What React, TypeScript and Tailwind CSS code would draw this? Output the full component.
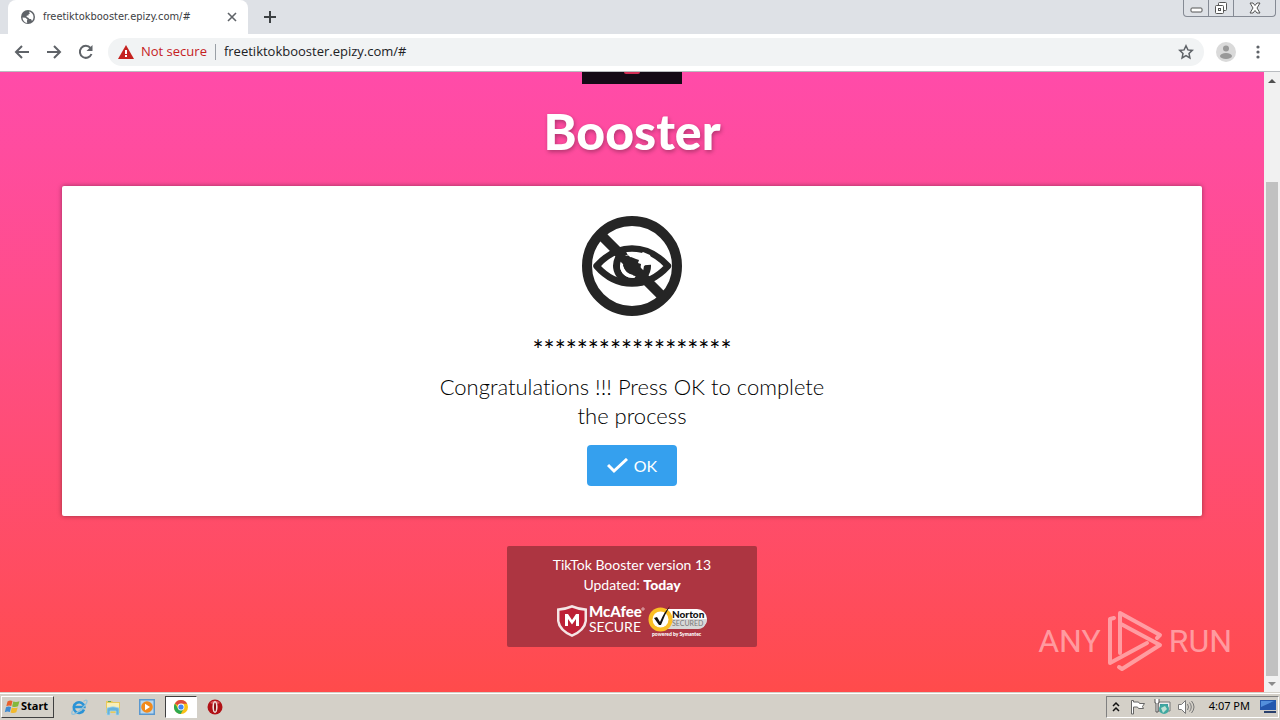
import { useState } from "react";

const QUICK_LAUNCH = [
  { label: "Internet Explorer", icon: <ExplorerIcon />, active: false },
  { label: "Windows Explorer", icon: <FolderIcon />, active: false },
  { label: "Media Player", icon: <MediaIcon />, active: false },
  { label: "Google Chrome", icon: <ChromeIcon />, active: true },
  { label: "Opera", icon: <OperaIcon />, active: false },
];

function GlobeIcon() {
  return (
    <svg width="16" height="16" viewBox="0 0 16 16">
      <circle cx="8" cy="8" r="7" fill="#5f6368" />
      <path d="M2.500 8.500l3 .3 2 1.700-.6 1.300.3 2.300C4.600 13.700 2.500 11.400 2.500 8.500z" fill="#fff" />
      <path d="M9 2.600c2.600.5 4.500 2.700 4.500 5.400 0 1.500-.6 2.900-1.500 3.900l-1-1.900H9.500L8 8.500 6.500 8l.3-1.500H8.500V5.300l1.300-.6z" fill="#fff" />
    </svg>
  );
}

function ExplorerIcon() {
  return (
    <svg width="18" height="18" viewBox="0 0 18 18" fill="none">
      <path d="M14 11.500A5.300 5.300 0 1 1 14.300 9H5" stroke="#2b93d6" strokeWidth="2.600" />
      <path d="M13.500 3.500C15.500 1.700 17 1.700 17 3.300c0 3-9 12-13.500 13-2 .3-2.300-1.500-.8-4" stroke="#8fc2dc" strokeWidth="1.300" />
    </svg>
  );
}

function FolderIcon() {
  return (
    <svg width="18" height="18" viewBox="0 0 18 18">
      <path d="M2 3h6l1 1h7v11H2z" fill="#e9c95b" />
      <path d="M3 5h12v5H3z" fill="#f8efb8" />
      <path d="M4 3h3v1H4z" fill="#5aa75a" />
      <path d="M3 10q6-2.500 12 0v7h-3v-4H6v4H3z" fill="#65b3dc" stroke="#a9d9f0" strokeWidth=".7" />
    </svg>
  );
}

function MediaIcon() {
  return (
    <svg width="18" height="18" viewBox="0 0 18 18">
      <path d="M1 1h16v16H1z" fill="#5a98cf" />
      <path d="M2.500 2.500h13v13h-13z" fill="#b9d7ee" />
      <circle cx="9" cy="9" r="5.800" fill="#f28a1c" />
      <path d="M7 5.700l5 3.300-5 3.300z" fill="#fff" />
    </svg>
  );
}

function ChromeIcon() {
  return (
    <svg width="16" height="16" viewBox="0 0 16 16">
      <circle cx="8" cy="8" r="7" fill="#fbc116" />
      <path d="M8 8L1.900 4.500A7 7 0 0 1 14.100 4.700H8z" fill="#dd4b3e" />
      <path d="M1.900 4.500A7 7 0 0 0 7.700 15L10.700 9.700 8 8 5 9.500z" fill="#2da94f" />
      <circle cx="8" cy="8" r="3.400" fill="#fff" />
      <circle cx="8" cy="8" r="2.600" fill="#4285f4" />
    </svg>
  );
}

function OperaIcon() {
  return (
    <svg width="16" height="16" viewBox="0 0 16 16">
      <circle cx="8" cy="8" r="7.500" fill="#b11116" />
      <path d="M3 4a6.500 6.500 0 0 1 10 0L8 6z" fill="#d9565a" />
      <ellipse cx="8" cy="8" rx="2.600" ry="6" fill="#f1e2de" />
      <ellipse cx="8" cy="8" rx="1" ry="4.500" fill="#8a0c10" />
    </svg>
  );
}

function StartFlag() {
  return (
    <svg width="17" height="16" viewBox="0 0 17 16">
      <path d="M3.500 2.500Q6 .8 8.500 2L7.300 7Q5 5.900 2.300 7.200z" fill="#e8602c" />
      <path d="M9.300 2.500Q12 3.600 15.500 2.200L14 7.300Q11 8.600 8.100 7.400z" fill="#84b83c" />
      <path d="M2 8.200Q4.800 6.900 7.100 8.100L5.900 13Q3.400 11.900.8 13.200z" fill="#3e8bd2" />
      <path d="M7.800 8.500Q10.700 9.700 13.700 8.400L12.300 13.300Q9.500 14.700 6.600 13.400z" fill="#f2b92d" />
    </svg>
  );
}

function HiddenEye() {
  return (
    <svg width="100" height="100" viewBox="0 0 100 100" fill="none" stroke="#252525">
      <circle cx="50" cy="50" r="45" strokeWidth="10" />
      <path d="M14.500 50C25 38 37 32.500 50 32.500S75 38 86 50C75 62 63 67.500 50 67.500S25 62 14.500 50z" strokeWidth="6.500" strokeLinejoin="round" />
      <path d="M44 35.500A15.500 15.500 0 1 0 65.500 49" strokeWidth="7" />
      <path d="M17 17L83 83" strokeWidth="10" />
      <path d="M42 44l7-3 5 2 3 1-1 3 3 1-1 8-6 4-8-3-3-7z" fill="#252525" stroke="none" />
      <path d="M43 40Q50 35 57 39l4-3 7 3 3 10-5-2-4 3v-4l-5-1 1-3Q50 38 43 40z" fill="#fff" stroke="none" />
      <path d="M38 50Q39 62 53 62l-2-3Q43 57 41 50z" fill="#fff" stroke="none" />
    </svg>
  );
}

function McAfeeBadge() {
  return (
    <svg width="90" height="34" viewBox="0 0 90 34" role="img" aria-label="McAfee Secure">
      <path d="M1 4.500Q9 4 16 1Q23 4 31 4.500V17Q30 27 16 33Q2 27 1 17z" fill="#f4e5e5" />
      <path d="M3.500 6.700Q10 6.200 16 3.700Q22 6.200 28.500 6.700V17Q27 25.500 16 30.300Q5 25.500 3.500 17z" fill="#bd2036" />
      <path d="M9 22V10h3l4 6 4-6h3v12h-3v-7l-4 5.500L12 15v7z" fill="#fff" />
      <g fill="#fff" fontFamily="Lato, sans-serif">
        <text x="33" y="13" fontSize="15" fontWeight="900">McAfee</text>
        <text x="33" y="28" fontSize="14">SECURE</text>
      </g>
      <circle cx="87" cy="5" r="1.200" stroke="#fff" strokeWidth=".6" fill="none" />
    </svg>
  );
}

function NortonBadge() {
  return (
    <svg width="60" height="34" viewBox="0 0 60 34" role="img" aria-label="Norton Secured">
      <rect x="3" y="5" width="56" height="20" rx="10" fill="#fff" />
      <path d="M22 15h37q-1 10-10 10H20z" fill="#d8d8d8" />
      <circle cx="12.500" cy="15.500" r="12" fill="#fbbf25" />
      <circle cx="12.500" cy="15.500" r="8" fill="#fff" />
      <path d="M6 14l3-1 3 5Q16 8 22 2Q17 10 13 21h-2z" fill="#111" />
      <g fontFamily="Lato, sans-serif">
        <text x="24" y="14" fontSize="10" fontWeight="900" fill="#111">Norton</text>
        <text x="24" y="22" fontSize="7" fill="#777">SECURED</text>
        <text x="4" y="32" fontSize="5" fontWeight="900" fill="#fff">powered by Symantec</text>
      </g>
    </svg>
  );
}

function WindowControls() {
  return (
    <div className="mr-1 flex h-[17px] rounded-b border border-t-0 border-[#858a94]">
      <button aria-label="Minimize" className="flex w-[25px] items-center justify-center border-r border-[#858a94]">
        <svg width="13" height="13" viewBox="0 0 13 13"><rect x="1" y="6" width="11" height="4" rx="1" fill="#fff" stroke="#555" /></svg>
      </button>
      <button aria-label="Restore" className="flex w-[25px] items-center justify-center border-r border-[#858a94]">
        <svg width="14" height="14" viewBox="0 0 14 14" fill="#fff" stroke="#555">
          <rect x="4.500" y="1.500" width="8" height="8" rx="1" />
          <rect x="1.500" y="4.500" width="8" height="8" rx="1" />
          <rect x="4.500" y="7.500" width="2" height="2" />
        </svg>
      </button>
      <button aria-label="Close window" className="flex w-[41px] items-center justify-center">
        <svg width="12" height="12" viewBox="0 0 12 12" fill="#fff" stroke="#555"><path d="M1 1h3l2 2.500L8 1h3L8 6l3 5H8L6 8.500 4 11H1l3-5z" /></svg>
      </button>
    </div>
  );
}

function TabStrip() {
  return (
    <div className="flex h-[34px] items-start justify-between bg-[#dee1e6]">
      <div className="flex h-full items-center pl-2">
        <div className="flex h-full w-60 items-center rounded-t-lg bg-white pl-3 pr-2">
          <GlobeIcon />
          <span className="ml-[7px] flex-1 font-['DejaVu_Sans_Condensed','DejaVu_Sans',sans-serif] text-[11px] text-[#3c4043]">
            freetiktokbooster.epizy.com/#
          </span>
          <button aria-label="Close tab" className="flex size-4 items-center justify-center">
            <svg width="10" height="10" viewBox="0 0 10 10" stroke="#5f6368" strokeWidth="1.600"><path d="M1 1l8 8M9 1L1 9" /></svg>
          </button>
        </div>
        <button aria-label="New tab" className="ml-4">
          <svg width="12" height="12" viewBox="0 0 12 12" stroke="#3c4043" strokeWidth="2"><path d="M6 0v12M0 6h12" /></svg>
        </button>
      </div>
      <WindowControls />
    </div>
  );
}

function Toolbar() {
  const [url, setUrl] = useState("freetiktokbooster.epizy.com/#");

  return (
    <div className="flex h-[38px] items-center border-b border-[#b9bcc0] bg-white px-3.5 pb-0.5">
      <div className="flex gap-4 text-[#5f6368]">
        <button aria-label="Back">
          <svg width="16" height="16" viewBox="0 0 16 16" fill="none" stroke="currentColor" strokeWidth="2"><path d="M15 8H2M8 2L2 8l6 6" /></svg>
        </button>
        <button aria-label="Forward">
          <svg width="16" height="16" viewBox="0 0 16 16" fill="none" stroke="currentColor" strokeWidth="2"><path d="M1 8h13M8 2l6 6-6 6" /></svg>
        </button>
        <button aria-label="Reload">
          <svg width="16" height="16" viewBox="0 0 16 16" fill="none" stroke="currentColor" strokeWidth="2">
            <path d="M13.500 10A6 6 0 1 1 12.500 4" />
            <path d="M14.500 1v6h-6z" fill="currentColor" stroke="none" />
          </svg>
        </button>
      </div>
      <div className="ml-3.5 flex h-7 flex-1 items-center rounded-full bg-[#f1f3f4] px-2.5 font-['Open_Sans',sans-serif] text-[13px]">
        <svg width="16" height="14" viewBox="0 0 16 14">
          <path d="M8 0l8 14H0z" fill="#c5221f" />
          <path d="M7 5h2v4H7zM7 10h2v2H7z" fill="#fff" />
        </svg>
        <span className="ml-[7px] text-[#c5221f]">Not secure</span>
        <span className="ml-2 h-4 w-px bg-[#9aa0a6]" />
        <input
          aria-label="Address"
          value={url}
          onChange={(e) => setUrl(e.target.value)}
          className="ml-2 min-w-0 flex-1 bg-transparent text-[#202124] outline-none"
        />
        <button aria-label="Bookmark this page">
          <svg width="16" height="16" viewBox="0 0 16 16" fill="none" stroke="#5f6368" strokeWidth="1.500">
            <path d="M8 1.800l1.900 4.100 4.400.5-3.300 3 .9 4.500L8 11.600l-3.900 2.300.9-4.500-3.300-3 4.400-.5z" />
          </svg>
        </button>
      </div>
      <button aria-label="Profile" className="ml-3">
        <svg width="20" height="20" viewBox="0 0 20 20">
          <circle cx="10" cy="10" r="10" fill="#dadada" />
          <circle cx="10" cy="6.500" r="3" fill="#999" />
          <ellipse cx="10" cy="14" rx="6" ry="3" fill="#999" />
        </svg>
      </button>
      <button aria-label="Menu" className="ml-3.5">
        <svg width="16" height="16" viewBox="0 0 16 16" fill="#5f6368">
          <circle cx="8" cy="3" r="1.600" />
          <circle cx="8" cy="8" r="1.600" />
          <circle cx="8" cy="13" r="1.600" />
        </svg>
      </button>
    </div>
  );
}

function Watermark() {
  return (
    <div className="absolute right-8 bottom-5 flex items-center gap-1.5 font-[Roboto,sans-serif] text-[32px] leading-none text-white/45">
      <span>ANY</span>
      <svg width="56" height="62" viewBox="0 0 56 62" fill="none" stroke="currentColor" strokeWidth="4" strokeLinejoin="round" strokeLinecap="round">
        <path d="M13 43V3L53 25L50 28M14 14L53 35L15 59L12 57" />
        <path d="M7 8L3 9V53L40 33" />
      </svg>
      <span>RUN</span>
    </div>
  );
}

function BoosterPage() {
  return (
    <main className="relative flex-1 overflow-hidden bg-linear-to-b from-[#ff4ba9] to-[#ff4b4b] px-8 font-[Lato,sans-serif] [font-variant-ligatures:none]">
      <div className="mx-auto flex h-3 w-[100px] justify-center overflow-hidden bg-[#140a16]">
        <div className="h-0.5 w-4 rounded-b-full bg-[#d32d56]" />
      </div>
      <h1 className="mt-[22px] text-center text-[50px] leading-[50px] font-black text-white [text-shadow:1px_2px_4px_rgba(0,0,0,0.3)]">
        Booster
      </h1>
      <section className="mx-auto mt-[30px] flex max-w-[1140px] flex-col items-center rounded-xs bg-white py-[30px] text-black shadow-[0_0_5px_rgba(0,0,0,0.4)]">
        <HiddenEye />
        <p className="mt-5 text-[26px] leading-[29px]">******************</p>
        <p className="mt-[7px] max-w-[400px] text-center text-[22px] leading-[29px] font-light">
          Congratulations !!! Press OK to complete the process
        </p>
        <button className="mt-[15px] flex h-[41px] w-[90px] items-center justify-center gap-1.5 rounded bg-[#35a0ee] text-[16px] text-white">
          <svg width="21" height="16" viewBox="0 0 21 16" fill="none" stroke="currentColor" strokeWidth="3"><path d="M1 7l6 6L20 1" /></svg>
          OK
        </button>
      </section>
      <footer className="mx-auto mt-[30px] flex h-[101px] w-[250px] flex-col items-center rounded-xs bg-[#ad3541] pt-[9px] text-center text-[14px] leading-5 text-white">
        <p>TikTok Booster version 13</p>
        <p>Updated: <strong className="font-black">Today</strong></p>
        <div className="mt-[9px] flex gap-0.5">
          <McAfeeBadge />
          <NortonBadge />
        </div>
      </footer>
      <Watermark />
    </main>
  );
}

function Scrollbar() {
  return (
    <div className="flex w-4 flex-col items-center bg-[#f1f1f1]">
      <svg width="16" height="17" viewBox="0 0 16 17" fill="#505050"><path d="M4 11l4-4 4 4z" /></svg>
      <div className="h-[93px]" />
      <div className="w-3 flex-1 bg-[#c1c1c1]" />
      <svg width="16" height="16" viewBox="0 0 16 16" fill="#8b8b8b"><path d="M4 6l4 4 4-4z" /></svg>
    </div>
  );
}

function Taskbar() {
  return (
    <div className="flex h-7 items-center justify-between border-t border-[#d4d0c8] bg-[#d4d0c8] px-px text-[11px] text-black shadow-[inset_0_1px_0_#fff]">
      <div className="flex items-center">
        <button className="flex h-[22px] w-[53px] items-center border border-t-white border-r-[#404040] border-b-[#404040] border-l-white px-0.5 text-[11px] font-bold">
          <StartFlag />
          Start
        </button>
        <div className="ml-[9px] flex items-center gap-0.5">
          {QUICK_LAUNCH.map((item) => (
            <button
              key={item.label}
              aria-label={item.label}
              className={`flex h-[22px] w-8 items-center justify-center ${
                item.active ? "border border-t-[#404040] border-r-white border-b-white border-l-[#404040] bg-white" : ""
              }`}
            >
              {item.icon}
            </button>
          ))}
        </div>
      </div>
      <div className="flex h-[22px] items-center border border-t-[#808080] border-r-white border-b-white border-l-[#808080] pl-1 pr-0.5">
        <svg width="10" height="12" viewBox="0 0 10 12" fill="none" stroke="#111" strokeWidth="1.500"><path d="M2 5l3-3 3 3M2 10l3-3 3 3" /></svg>
        <svg className="ml-2" width="18" height="16" viewBox="0 0 18 16" fill="#fff" stroke="#666"><path d="M2.500 15V1.500h2V3h5l1 1.500h5l-2 3 1 2h-5L8.500 8h-4v7z" /></svg>
        <svg className="ml-1.5" width="18" height="17" viewBox="0 0 18 17">
          <path d="M5 4h12v9H5z" fill="#eee" stroke="#777" />
          <path d="M7 6h8v5H7z" fill="#3997a1" />
          <circle cx="11" cy="11" r="5" fill="#3fa8a0" />
          <path d="M8 10l4-2 2 3-4 4z" fill="#bfe0d4" />
          <path d="M2 1v4h1v9h2V5h1V1" fill="#fff" stroke="#555" />
        </svg>
        <svg className="ml-1.5" width="18" height="16" viewBox="0 0 18 16" fill="none" stroke="#777">
          <path d="M1.500 5.500h3l4-4v13l-4-4h-3z" fill="#fff" />
          <path d="M10.500 5q2 3 0 6M12.500 3.500q3.500 4.500 0 9M14.500 2q5 6 0 12" />
        </svg>
        <time className="ml-3.5">4:07 PM</time>
        <svg className="ml-2.5" width="16" height="15" viewBox="0 0 16 15">
          <path d="M0 1h16v10H0z" fill="#2458ae" />
          <path d="M1 2h13L1 8z" fill="#5390dc" />
          <path d="M4 12h12v2H4z" fill="#29406c" />
        </svg>
      </div>
    </div>
  );
}

export default function App() {
  return (
    <div className="flex h-screen flex-col overflow-hidden font-['Noto_Sans',sans-serif]">
      <TabStrip />
      <Toolbar />
      <div className="flex min-h-0 flex-1">
        <BoosterPage />
        <Scrollbar />
      </div>
      <Taskbar />
    </div>
  );
}
